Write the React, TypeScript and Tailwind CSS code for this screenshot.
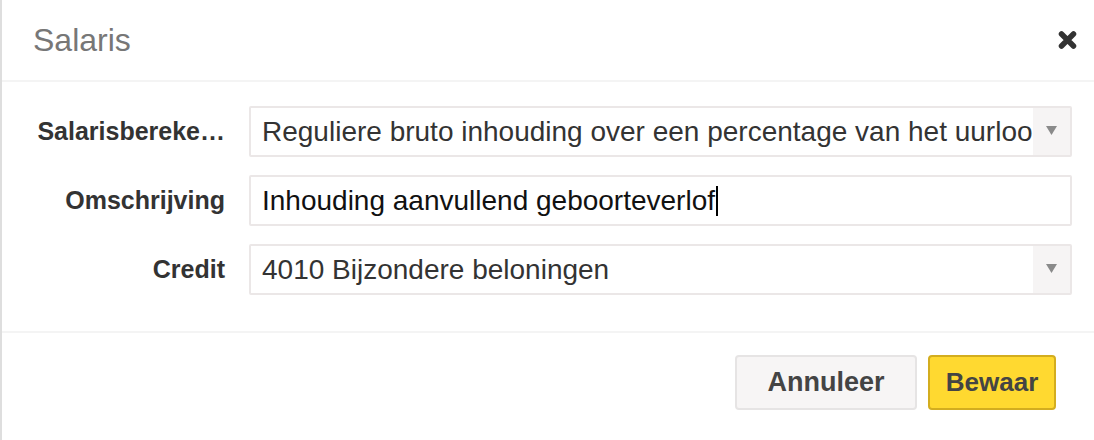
const font = { fontFamily: '"Liberation Sans", Arial, Helvetica, sans-serif' };

function Caret() {
  return (
    <div className="flex w-[37px] shrink-0 items-start justify-center bg-[#f6f4f4] pt-[18px]">
      <svg width="11" height="9" viewBox="0 0 11 9">
        <path d="M0 0 H11 L5.5 9 Z" fill="#8a8a8a" />
      </svg>
    </div>
  );
}

function Row({ label, children }: { label: string; children: React.ReactNode }) {
  return (
    <div className="flex items-center">
      <label className="w-[223px] shrink-0 whitespace-nowrap text-right text-[25px] font-bold text-[#333]">
        {label}
      </label>
      <div className="ml-[24px] h-[51px] w-[823px] overflow-hidden rounded-[2px] border-2 border-[#ebe7e7] bg-white">
        {children}
      </div>
    </div>
  );
}

export default function App() {
  return (
    <div className="h-[440px] w-[1094px] border-l-2 border-[#dedede] bg-white" style={font}>
      <div className="flex h-[82px] items-center justify-between border-b-2 border-[#f4f4f4] pl-[31px] pr-[17px]">
        <h1 className="text-[32px] text-[#777]">Salaris</h1>
        <button className="flex h-[20px] w-[20px] items-center justify-center">
          <svg width="19" height="18" viewBox="0 0 19 18">
            <path d="M3.5 3 L15.5 15 M15.5 3 L3.5 15" stroke="#333" strokeWidth="5.5" strokeLinecap="round" />
          </svg>
        </button>
      </div>

      <div className="flex flex-col gap-[18px] pb-[36px] pt-[24px]">
        <Row label="Salarisbereke…">
          <div className="flex h-full">
            <div className="flex min-w-0 flex-1 items-center overflow-hidden whitespace-nowrap pl-[11px] text-[28px] text-[#333]">
              Reguliere bruto inhouding over een percentage van het uurloon
            </div>
            <Caret />
          </div>
        </Row>
        <Row label="Omschrijving">
          <div className="flex h-full items-center pl-[11px] text-[28px] text-[#111]">
            Inhouding aanvullend geboorteverlof
            <span className="ml-[1px] h-[30px] w-[2px] bg-black" />
          </div>
        </Row>
        <Row label="Credit">
          <div className="flex h-full">
            <div className="flex min-w-0 flex-1 items-center overflow-hidden whitespace-nowrap pl-[11px] text-[28px] text-[#333]">
              4010 Bijzondere beloningen
            </div>
            <Caret />
          </div>
        </Row>
      </div>

      <div className="flex justify-end gap-[11px] border-t-2 border-[#f4f4f4] pr-[38px] pt-[22px]">
        <button className="h-[55px] w-[182px] rounded-[4px] border-2 border-[#e6e4e4] bg-[#f7f5f5] text-[27px] font-bold text-[#444]">
          Annuleer
        </button>
        <button className="h-[55px] w-[128px] rounded-[4px] border-2 border-[#d3ad1f] bg-[#ffd930] text-[26px] font-bold text-[#444]">
          Bewaar
        </button>
      </div>
    </div>
  );
}
